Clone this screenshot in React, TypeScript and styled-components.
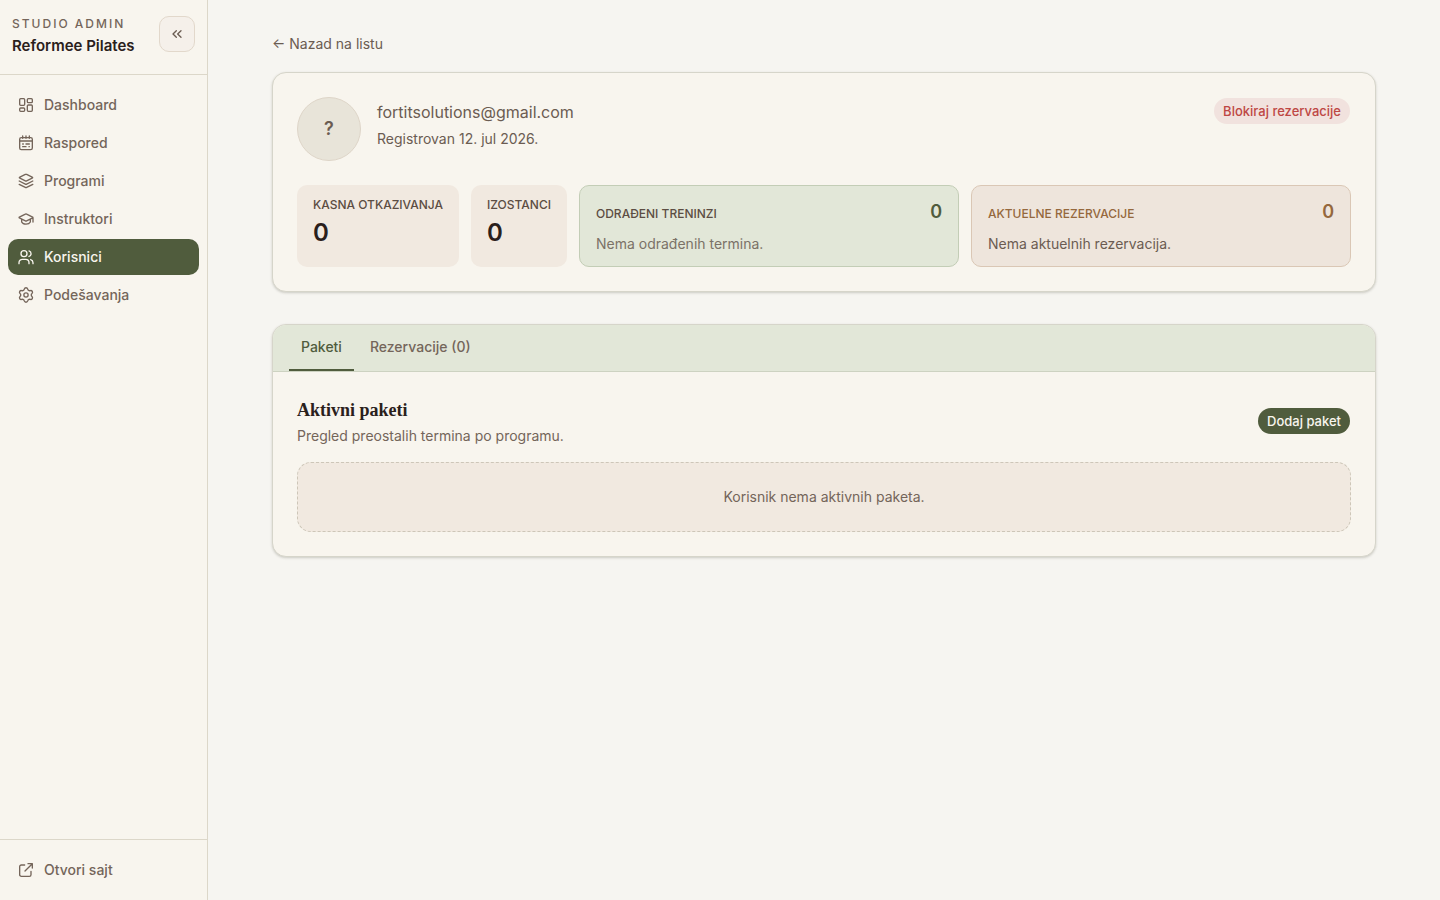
import React from "react";
import styled, { createGlobalStyle, css } from "styled-components";
import { ChevronsLeft } from "lucide-react";

const GlobalStyle = createGlobalStyle`
  *, *::before, *::after { box-sizing: border-box; }
  body {
    margin: 0;
    background: #f6f5f1;
    color: #2a201b;
    font-family: Inter, "Liberation Sans", sans-serif;
    font-size: 14px;
    line-height: 20px;
  }
  h2, p, ul { margin: 0; padding: 0; }
  button { font: inherit; cursor: pointer; }
  a { color: inherit; text-decoration: none; }
`;

const Shell = styled.div`
  display: flex;
  min-height: 100vh;
`;

const Sidebar = styled.aside`
  display: flex;
  flex-direction: column;
  flex: 0 0 208px;
  border-right: 1px solid #dcd7c9;
  background: #f8f5ee;
`;

const Brand = styled.header`
  display: flex;
  align-items: flex-start;
  justify-content: space-between;
  padding: 16px 12px 18px;
  border-bottom: 1px solid #dcd7c9;
`;

const BrandLabel = styled.p`
  color: #74655a;
  font-size: 12px;
  font-weight: 500;
  line-height: 16px;
  letter-spacing: 2px;
  text-transform: uppercase;
`;

const BrandName = styled.p`
  margin-top: 4px;
  font-size: 15px;
  font-weight: 600;
  line-height: 20px;
  white-space: nowrap;
`;

const CollapseButton = styled.button`
  display: grid;
  place-items: center;
  flex: none;
  width: 36px;
  height: 36px;
  padding: 0;
  border: 1px solid #e2d8cb;
  border-radius: 10px;
  background: #f5f0ea;
  color: #6b5c52;
`;

const Nav = styled.nav`
  flex: 1;
  padding: 12px 8px;
`;

const NavList = styled.ul`
  display: grid;
  gap: 2px;
  list-style: none;
`;

const NavLink = styled.a<{ $active?: boolean }>`
  display: flex;
  align-items: center;
  gap: 10px;
  height: 36px;
  padding: 0 10px;
  border-radius: 10px;
  font-weight: 500;
  color: ${(p) => (p.$active ? "#f8f5ee" : "#74655a")};
  background: ${(p) => (p.$active ? "#505c3d" : "transparent")};
`;

const SidebarFooter = styled.footer`
  padding: 12px 8px;
  border-top: 1px solid #dcd7c9;
`;

const Main = styled.main`
  flex: 1;
  min-width: 0;
  padding: 32px 64px;
`;

const BackLink = styled.a`
  display: inline-block;
  margin-bottom: 16px;
  line-height: 24px;
  color: #6b5c52;
`;

const Card = styled.section`
  overflow: hidden;
  border: 1px solid #d6d5ca;
  border-radius: 14px;
  background: #f8f5ee;
  box-shadow: 0 1px 3px rgba(60, 60, 40, 0.12), 0 1px 2px rgba(60, 60, 40, 0.1);

  & + & { margin-top: 32px; }
`;

const CardBody = styled.div`
  padding: 24px;
`;

const Profile = styled.div`
  display: flex;
  align-items: flex-start;
  gap: 16px;
  margin-bottom: 24px;
`;

const Avatar = styled.div`
  display: grid;
  place-items: center;
  width: 64px;
  height: 64px;
  border: 1px solid #ded5c8;
  border-radius: 50%;
  background: #e8e4d9;
  color: #6b5c52;
  font-size: 18px;
  font-weight: 600;
`;

const Identity = styled.div`
  flex: 1;
  padding-top: 4px;
  color: #6b5c52;
`;

const Email = styled.p`
  margin-bottom: 6px;
  font-size: 16px;
  line-height: 22px;
`;

const PillButton = styled.button<{ $tone: "danger" | "primary" }>`
  height: 28px;
  padding: 0 9px;
  border: 1px solid transparent;
  border-radius: 14px;
  background-clip: padding-box;
  font-size: 13px;
  font-weight: 500;
  line-height: 20px;
  white-space: nowrap;
  ${(p) =>
    p.$tone === "danger"
      ? css`background-color: #f1e2de; color: #be4744;`
      : css`background-color: #505c3d; color: #f8f5ee;`}
`;

const Stats = styled.div`
  display: grid;
  grid-template-columns: auto auto 1fr 1fr;
  gap: 12px;
`;

const StatBox = styled.div`
  padding: 12px 16px;
  border-radius: 10px;
  background: #f1e9e0;
`;

const StatLabel = styled.h2`
  color: #5c4d43;
  font-size: 12px;
  font-weight: 500;
  line-height: 16px;
  text-transform: uppercase;
  white-space: nowrap;
`;

const StatValue = styled.p`
  margin-top: 4px;
  font-size: 24px;
  font-weight: 600;
  line-height: 32px;
`;

const SessionBox = styled.div<{ $tone: "green" | "clay" }>`
  padding: 12px 16px;
  border: 1px solid ${(p) => (p.$tone === "green" ? "#c3cdb6" : "#dac7b5")};
  border-radius: 10px;
  background: ${(p) => (p.$tone === "green" ? "#e2e7d8" : "#eee5dc")};
  color: ${(p) => (p.$tone === "green" ? "#505c3d" : "#95683d")};

  ${StatLabel} { color: ${(p) => (p.$tone === "green" ? "#5c4d43" : "#95683d")}; }
`;

const SessionHead = styled.div`
  display: flex;
  align-items: baseline;
  justify-content: space-between;
  margin-bottom: 8px;
`;

const SessionCount = styled.span`
  font-size: 18px;
  font-weight: 600;
  line-height: 28px;
`;

const SessionNote = styled.p<{ $soft?: boolean }>`
  color: ${(p) => (p.$soft ? "#7b7267" : "#6b5c52")};
`;

const TabBar = styled.div`
  display: flex;
  gap: 4px;
  padding: 0 16px;
  border-bottom: 1px solid #cdd2c1;
  background: #e2e7d8;
`;

const Tab = styled.button<{ $active?: boolean }>`
  padding: 12px 12px;
  border: 0;
  border-bottom: 2px solid ${(p) => (p.$active ? "#505c3d" : "transparent")};
  background: none;
  color: ${(p) => (p.$active ? "#505c3d" : "#74655a")};
  font-weight: 500;
  line-height: 20px;
`;

const SectionHead = styled.div`
  display: flex;
  align-items: center;
  justify-content: space-between;
  margin-bottom: 16px;
  color: #74655a;
`;

const SectionTitle = styled.h2`
  margin-bottom: 2px;
  color: #2a201b;
  font-family: "Liberation Serif", serif;
  font-size: 18px;
  font-weight: 700;
  line-height: 28px;
`;

const EmptyState = styled.p`
  && { padding: 24px; }
  border: 1px dashed #cdc6b8;
  border-radius: 14px;
  background: #f1e9e0;
  color: #74655a;
  text-align: center;
`;

const Glyph = ({ children }: { children: React.ReactNode }) => (
  <svg width="16" height="16" viewBox="0 0 24 24" fill="none" stroke="currentColor" strokeWidth="2" strokeLinecap="round" strokeLinejoin="round" aria-hidden="true">
    {children}
  </svg>
);

const icons = {
  dashboard: (
    <Glyph>
      <rect x="2.5" y="2.5" width="7.5" height="10" rx="1.5" />
      <rect x="14" y="2.5" width="7.5" height="6" rx="1.5" />
      <rect x="2.5" y="16.5" width="7.5" height="5" rx="1.5" />
      <rect x="14" y="12" width="7.5" height="9.5" rx="1.5" />
    </Glyph>
  ),
  calendar: (
    <Glyph>
      <rect x="2.5" y="4" width="19" height="18" rx="2.5" />
      <path d="M7 1.5V5M12 1.5V5M17 1.5V5M2.5 9h19M7 13.5h1M12 13.5h5M7 17.5h5M16.5 17.5h.5" />
    </Glyph>
  ),
  layers: (
    <Glyph>
      <path d="M11 2.2a2 2 0 0 1 2 0l8.2 4q1.6.8 0 1.6l-8.2 4a2 2 0 0 1-2 0l-8.2-4q-1.6-.8 0-1.6zM1.8 12l9.2 4.6a2 2 0 0 0 2 0l9.2-4.6M1.8 17l9.2 4.6a2 2 0 0 0 2 0l9.2-4.6" />
    </Glyph>
  ),
  cap: (
    <Glyph>
      <path d="M2 9.2 11 4.6a2 2 0 0 1 2 0l9 4.6q.8.6 0 1.2l-9 4.4a2 2 0 0 1-2 0l-9-4.4q-.8-.6 0-1.2zM5.5 12.5v4c2.2 4.4 10.8 4.4 13 0v-4M22.5 10v6.5" />
    </Glyph>
  ),
  users: (
    <Glyph>
      <circle cx="9" cy="7" r="4.5" />
      <path d="M1.5 22v-1.5a5 5 0 0 1 5-5h5a5 5 0 0 1 5 5V22M16.5 2.8a4.4 4.4 0 0 1 0 8.4M19 15.8a5 5 0 0 1 3.5 4.7V22" />
    </Glyph>
  ),
  settings: (
    <Glyph>
      <path d="M9.4 3.1a2.7 2.7 0 0 1 5.2 0 2.7 2.7 0 0 0 3.8 2.2 2.7 2.7 0 0 1 2.6 4.5 2.7 2.7 0 0 0 0 4.4 2.7 2.7 0 0 1-2.6 4.5 2.7 2.7 0 0 0-3.8 2.2 2.7 2.7 0 0 1-5.2 0 2.7 2.7 0 0 0-3.8-2.2A2.7 2.7 0 0 1 3 14.2a2.7 2.7 0 0 0 0-4.4 2.7 2.7 0 0 1 2.6-4.5 2.7 2.7 0 0 0 3.8-2.2" />
      <circle cx="12" cy="12" r="3.2" />
    </Glyph>
  ),
  external: (
    <Glyph>
      <path d="M10 4.5H5A2.5 2.5 0 0 0 2.5 7v12A2.5 2.5 0 0 0 5 21.5h12a2.5 2.5 0 0 0 2.5-2.5v-5M15 2.5h6.5V9M21.5 2.5 10.5 13.5" />
    </Glyph>
  ),
};

const navItems = [
  { label: "Dashboard", icon: icons.dashboard },
  { label: "Raspored", icon: icons.calendar },
  { label: "Programi", icon: icons.layers },
  { label: "Instruktori", icon: icons.cap },
  { label: "Korisnici", icon: icons.users, active: true },
  { label: "Podešavanja", icon: icons.settings },
];

export default function App() {
  return (
    <>
      <GlobalStyle />
      <Shell>
        <Sidebar>
          <Brand>
            <div>
              <BrandLabel>Studio admin</BrandLabel>
              <BrandName>Reformee Pilates</BrandName>
            </div>
            <CollapseButton type="button" aria-label="Skupi meni">
              <ChevronsLeft size={16} />
            </CollapseButton>
          </Brand>
          <Nav>
            <NavList>
              {navItems.map((item) => (
                <li key={item.label}>
                  <NavLink href="#" $active={item.active} aria-current={item.active ? "page" : undefined}>
                    {item.icon}
                    {item.label}
                  </NavLink>
                </li>
              ))}
            </NavList>
          </Nav>
          <SidebarFooter>
            <NavLink href="#">
              {icons.external}
              Otvori sajt
            </NavLink>
          </SidebarFooter>
        </Sidebar>

        <Main>
          <BackLink href="#">← Nazad na listu</BackLink>
          <Card>
            <CardBody>
              <Profile>
                <Avatar>?</Avatar>
                <Identity>
                  <Email>fortitsolutions@gmail.com</Email>
                  <p>Registrovan 12. jul 2026.</p>
                </Identity>
                <PillButton type="button" $tone="danger">Blokiraj rezervacije</PillButton>
              </Profile>
              <Stats>
                <StatBox>
                  <StatLabel>Kasna otkazivanja</StatLabel>
                  <StatValue>0</StatValue>
                </StatBox>
                <StatBox>
                  <StatLabel>Izostanci</StatLabel>
                  <StatValue>0</StatValue>
                </StatBox>
                <SessionBox $tone="green">
                  <SessionHead>
                    <StatLabel>Odrađeni treninzi</StatLabel>
                    <SessionCount>0</SessionCount>
                  </SessionHead>
                  <SessionNote $soft>Nema odrađenih termina.</SessionNote>
                </SessionBox>
                <SessionBox $tone="clay">
                  <SessionHead>
                    <StatLabel>Aktuelne rezervacije</StatLabel>
                    <SessionCount>0</SessionCount>
                  </SessionHead>
                  <SessionNote>Nema aktuelnih rezervacija.</SessionNote>
                </SessionBox>
              </Stats>
            </CardBody>
          </Card>

          <Card>
            <TabBar role="tablist">
              <Tab type="button" role="tab" aria-selected="true" $active>Paketi</Tab>
              <Tab type="button" role="tab" aria-selected="false">Rezervacije (0)</Tab>
            </TabBar>
            <CardBody role="tabpanel">
              <SectionHead>
                <div>
                  <SectionTitle>Aktivni paketi</SectionTitle>
                  <p>Pregled preostalih termina po programu.</p>
                </div>
                <PillButton type="button" $tone="primary">Dodaj paket</PillButton>
              </SectionHead>
              <EmptyState>Korisnik nema aktivnih paketa.</EmptyState>
            </CardBody>
          </Card>
        </Main>
      </Shell>
    </>
  );
}
